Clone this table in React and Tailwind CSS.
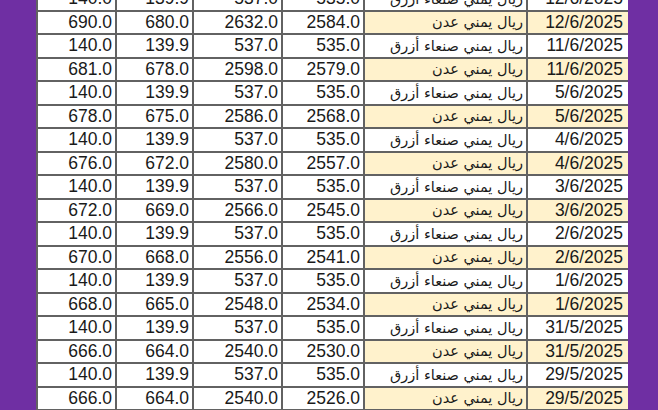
import React from 'react';

const SANAA = 'ريال يمني صنعاء أزرق';
const ADEN = 'ريال يمني عدن';

const rows = [
  ['140.0', '139.9', '537.0', '535.0', SANAA, '12/6/2025'],
  ['690.0', '680.0', '2632.0', '2584.0', ADEN, '12/6/2025'],
  ['140.0', '139.9', '537.0', '535.0', SANAA, '11/6/2025'],
  ['681.0', '678.0', '2598.0', '2579.0', ADEN, '11/6/2025'],
  ['140.0', '139.9', '537.0', '535.0', SANAA, '5/6/2025'],
  ['678.0', '675.0', '2586.0', '2568.0', ADEN, '5/6/2025'],
  ['140.0', '139.9', '537.0', '535.0', SANAA, '4/6/2025'],
  ['676.0', '672.0', '2580.0', '2557.0', ADEN, '4/6/2025'],
  ['140.0', '139.9', '537.0', '535.0', SANAA, '3/6/2025'],
  ['672.0', '669.0', '2566.0', '2545.0', ADEN, '3/6/2025'],
  ['140.0', '139.9', '537.0', '535.0', SANAA, '2/6/2025'],
  ['670.0', '668.0', '2556.0', '2541.0', ADEN, '2/6/2025'],
  ['140.0', '139.9', '537.0', '535.0', SANAA, '1/6/2025'],
  ['668.0', '665.0', '2548.0', '2534.0', ADEN, '1/6/2025'],
  ['140.0', '139.9', '537.0', '535.0', SANAA, '31/5/2025'],
  ['666.0', '664.0', '2540.0', '2530.0', ADEN, '31/5/2025'],
  ['140.0', '139.9', '537.0', '535.0', SANAA, '29/5/2025'],
  ['666.0', '664.0', '2540.0', '2526.0', ADEN, '29/5/2025'],
];

const App = () => {
  return (
    <div className="w-[658px] h-[410px] overflow-hidden bg-[#6f2fa3] flex">
      <div className="w-[36px] shrink-0" />
      <div className="w-[592px] shrink-0 overflow-hidden">
        <table
          className="table-fixed border-collapse w-[592px] -mt-[14px] bg-white text-[#1a1a1a]"
          style={{ fontFamily: '"Liberation Sans", Arial, sans-serif' }}
        >
          <colgroup>
            <col className="w-[79px]" />
            <col className="w-[77px]" />
            <col className="w-[89px]" />
            <col className="w-[82px]" />
            <col className="w-[163px]" />
            <col className="w-[102px]" />
          </colgroup>
          <tbody>
            {rows.map((r, i) => {
              const aden = r[4] === ADEN;
              return (
                <tr key={i} className="h-[23.5px]">
                  {r.slice(0, 4).map((v, j) => (
                    <td
                      key={j}
                      className="border-2 border-[#626262] text-right pr-[3px] text-[17.5px] leading-none p-0 bg-white"
                    >
                      {v}
                    </td>
                  ))}
                  <td
                    dir="rtl"
                    className={`border-2 border-[#626262] text-right pr-[3px] text-[14.5px] leading-none p-0 whitespace-nowrap ${aden ? 'bg-[#fff2cc]' : 'bg-white'}`}
                    style={{ fontFamily: '"DejaVu Sans", sans-serif' }}
                  >
                    {r[4]}
                  </td>
                  <td
                    className={`border-2 border-[#626262] text-right pr-[5px] text-[17.5px] leading-none p-0 ${aden ? 'bg-[#fff2cc]' : 'bg-white'}`}
                  >
                    {r[5]}
                  </td>
                </tr>
              );
            })}
          </tbody>
        </table>
      </div>
      <div className="flex-1" />
    </div>
  );
};

export default App;
